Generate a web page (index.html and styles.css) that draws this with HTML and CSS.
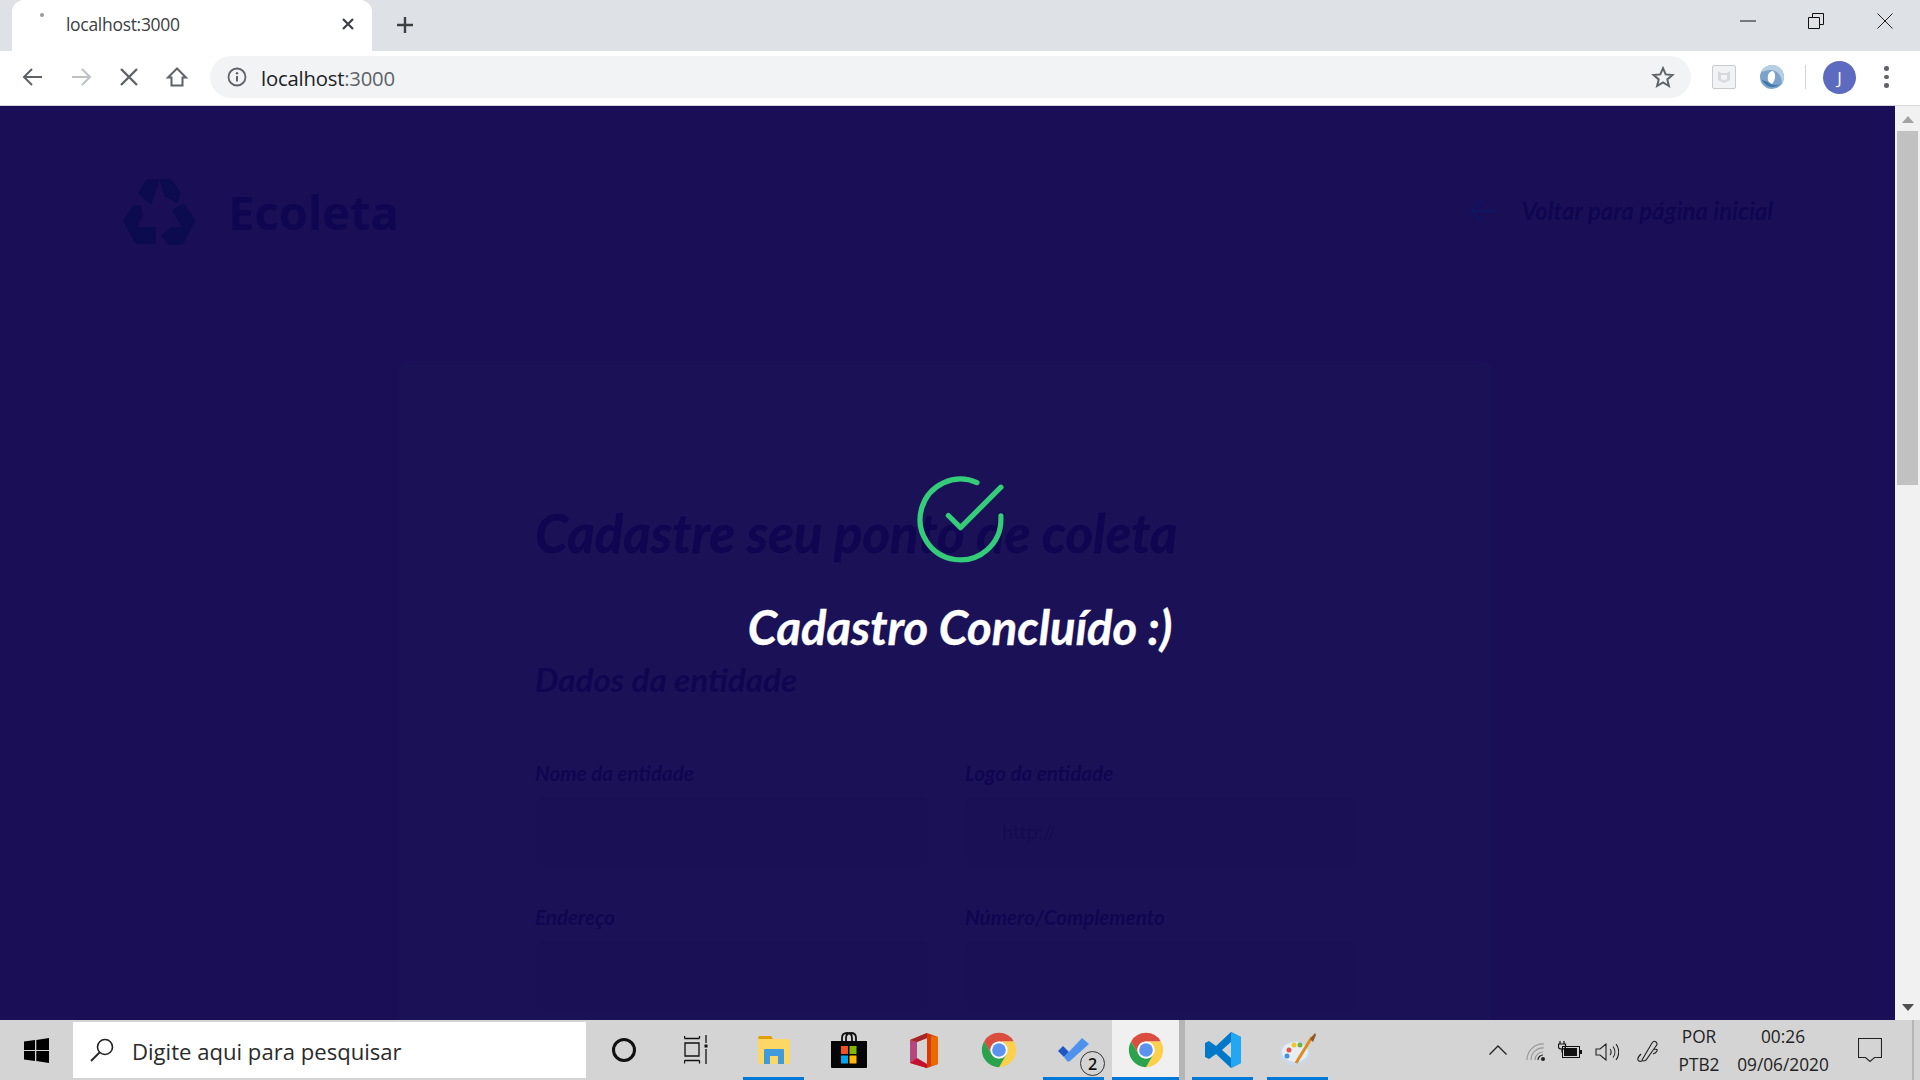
FILE: index.html
```html
<!DOCTYPE html>
<html lang="pt-BR">
<head>
<meta charset="utf-8">
<title>localhost:3000</title>
<link rel="stylesheet" href="styles.css">
</head>
<body>
<div class="window">
  <div class="tabstrip">
    <div class="tab">
      <span class="tab-spinner"></span>
      <span class="tab-title">localhost:3000</span>
      <svg class="tab-close" width="14" height="14" viewBox="0 0 14 14"><path d="M2 2l10 10M12 2L2 12" stroke="#3c4043" stroke-width="2.2" fill="none"/></svg>
    </div>
    <svg class="new-tab" width="20" height="20" viewBox="0 0 20 20"><path d="M10 2v16M2 10h16" stroke="#3c4043" stroke-width="2.4" fill="none"/></svg>
    <div class="win-controls">
      <svg class="win-min" width="16" height="2" viewBox="0 0 16 2"><path d="M0 1h16" stroke="#111" stroke-width="1"/></svg>
      <svg class="win-max" width="16" height="16" viewBox="0 0 16 16"><path d="M.5 4.5h11v11H.5zM4.5 4.5v-4h11v11h-4" stroke="#111" fill="none"/></svg>
      <svg class="win-close" width="16" height="16" viewBox="0 0 16 16"><path d="M.5.5l15 15M15.5.5l-15 15" stroke="#222" fill="none"/></svg>
    </div>
  </div>

  <div class="toolbar">
    <svg class="nav" width="24" height="24" viewBox="0 0 24 24"><path d="M21 12H4M11 4l-8 8 8 8" stroke="#5f6368" stroke-width="2" fill="none"/></svg>
    <svg class="nav" width="24" height="24" viewBox="0 0 24 24"><path d="M3 12h17M13 4l8 8-8 8" stroke="#bdc1c6" stroke-width="2" fill="none"/></svg>
    <svg class="nav" width="24" height="24" viewBox="0 0 24 24"><path d="M4 4l16 16M20 4L4 20" stroke="#5f6368" stroke-width="2.4" fill="none"/></svg>
    <svg class="nav" width="24" height="24" viewBox="0 0 24 24"><path d="M12 3.5L3 12.5h3.5v8h11v-8H21z" stroke="#5f6368" stroke-width="2" fill="none"/></svg>
    <div class="omnibox">
      <svg class="info" width="20" height="20" viewBox="0 0 20 20"><circle cx="10" cy="10" r="8.5" stroke="#5f6368" stroke-width="1.8" fill="none"/><path d="M10 9v5.5" stroke="#5f6368" stroke-width="2"/><circle cx="10" cy="6.2" r="1.2" fill="#5f6368"/></svg>
      <span class="url"><span class="url-host">localhost</span>:3000</span>
      <svg class="star" width="24" height="24" viewBox="0 0 24 24"><path d="M12 3.2l2.7 6.2 6.7.6-5.1 4.4 1.6 6.6L12 17.5 6.1 21l1.6-6.6L2.6 10l6.7-.6z" stroke="#5f6368" stroke-width="2" fill="none"/></svg>
    </div>
    <div class="ext-mcafee">
      <svg width="14" height="14" viewBox="0 0 14 14"><path d="M1 1l3 2h6l3-2v9l-6 3-6-3z M4 5v4l3 1.6L10 9V5z" fill="#d5dadd" fill-rule="evenodd"/></svg>
    </div>
    <svg class="ext-ring" width="24" height="24" viewBox="0 0 24 24"><circle cx="12" cy="12" r="12" fill="#7ba3c9"/><path d="M12 0a12 12 0 0 1 10 18.5C22 11 18 6 12 5 8 4.500 4 6 1.500 7 3 3 7 0 12 0z" fill="#b6cfe2"/><path d="M13 6c3 2 3 9-1 13-3-1-5-4-4-8 0-3 3-5 5-5z" fill="#fff"/><path d="M2 15c2 4 6 7 10 7 3 0 6-1 8-3-4 2-9 1-12-2z" fill="#3f78ad"/></svg>
    <span class="divider"></span>
    <span class="avatar">J</span>
    <span class="menu"><i></i><i></i><i></i></span>
  </div>

  <div class="viewport">
    <div class="page">
      <header class="page-header">
        <div class="logo">
          <svg class="logo-mark" width="73" height="68" viewBox="68 82 220 204"><g fill="#0c0b50" stroke="#0c0b50" stroke-width="5" stroke-linejoin="round"><path d="M116 128L140 88h35l-23 70z"/><path d="M180 86h25q7 0 11 7l23 32-8 29-36-19z"/><path d="M120 166l5 29-20 37h60v47h-47q-10 0-16-12l-32-57 30-44z"/><path d="M250 161l34 49-34 64q-4 6-12 6h-33l-19-25 29-23h35l-32-52z"/></g></svg>
        <span class="logo-text">Ecoleta</span>
        </div>
        <a class="back-link">
          <svg class="back-arrow" width="26" height="24" viewBox="0 0 26 24"><path d="M25 12H2M12 2L2 12l10 10" stroke="#101562" stroke-width="2.500" fill="none"/></svg>
          <span>Voltar para página inicial</span>
        </a>
      </header>
      <main class="card">
        <h1 class="card-title">Cadastre seu ponto de coleta</h1>
        <h2 class="card-section">Dados da entidade</h2>
        <div class="field-grid">
          <div class="field"><label>Nome da entidade</label><div class="input"></div></div>
          <div class="field"><label>Logo da entidade</label><div class="input input-placeholder">http://</div></div>
          <div class="field"><label>Endereço</label><div class="input"></div></div>
          <div class="field"><label>Número/Complemento</label><div class="input"></div></div>
        </div>
      </main>
    </div>
    <div class="overlay">
      <svg class="check" width="97" height="97" viewBox="0 0 24 24"><path d="M22 11.080V12a10 10 0 1 1-5.930-9.140M22 4L12 14.010l-3-3" stroke="#34cb79" stroke-width="1.300" stroke-linecap="round" stroke-linejoin="round" fill="none"/></svg>
      <p class="overlay-text">Cadastro Concluído :)</p>
    </div>
    <div class="scrollbar">
      <svg class="sb-arrow" width="12" height="7" viewBox="0 0 12 7"><path d="M6 0l6 7H0z" fill="#a3a3a3"/></svg>
      <div class="sb-track"><div class="sb-thumb"></div></div>
      <svg class="sb-arrow" width="12" height="7" viewBox="0 0 12 7"><path d="M6 7L0 0h12z" fill="#505050"/></svg>
    </div>
  </div>

  <div class="taskbar">
    <div class="start">
      <svg width="25" height="25" viewBox="0 0 25 25"><path d="M0 3.600l11-1.500v9.800H0zM12.300 1.900L25 0v11.900H12.300zM0 13.100h11v9.800L0 21.400zM12.300 13.100H25V25l-12.700-1.900z" fill="#000"/></svg>
    </div>
    <div class="search">
      <svg width="26" height="26" viewBox="0 0 26 26"><circle cx="16" cy="10" r="7.500" stroke="#222" stroke-width="1.600" fill="none"/><path d="M10.500 15.500L2 24" stroke="#222" stroke-width="1.800"/></svg>
      <span>Digite aqui para pesquisar</span>
    </div>
    <div class="tb-slot tb-cortana"><span class="cortana"></span></div>
    <div class="tb-slot tb-taskview">
      <svg width="24" height="30" viewBox="0 0 24 30"><path d="M.5 3.500h15M1 8h14v13H1zM.5 25.500h15M.5 25.500v3M15.500 25.500v3M.5 1v2.500M15.500 1v2.500M22 0v8M22 14v15" stroke="#111" stroke-width="1.300" fill="none"/><rect x="20.500" y="9.500" width="3" height="3" fill="#111"/></svg>
    </div>
    <div class="tb-slot tb-open">
      <svg width="32" height="28" viewBox="0 0 32 28"><path d="M0 2q0-2 2-2h11l2 3H1z" fill="#dfa000"/><path d="M0 3h30q2 0 2 2v21q0 2-2 2H2q-2 0-2-2z" fill="#fcd766"/><path d="M6 28V14q0-1 1-1h18q1 0 1 1v14h-6v-8h-8v8z" fill="#3f9bdc"/></svg>
    </div>
    <div class="tb-slot">
      <svg width="36" height="36" viewBox="0 0 36 36"><path d="M11 9V6q0-5 5-5t5 5v3M15 9V6q0-5 5-5t5 5v3" stroke="#111" stroke-width="1.800" fill="none"/><path d="M0 9h36v26q0 1-1 1H1q-1 0-1-1z" fill="#050505"/><rect x="10" y="14" width="7" height="8" fill="#f25022"/><rect x="18.500" y="14" width="7" height="8" fill="#7fba00"/><rect x="10" y="23.500" width="7" height="8" fill="#00a4ef"/><rect x="18.500" y="23.500" width="7" height="8" fill="#ffb900"/></svg>
    </div>
    <div class="tb-slot">
      <svg width="28" height="35" viewBox="0 0 28 35"><path d="M17 0l11 4v27l-11 4-17-5 17 1.500V5L7 9v16l-7 5V7z" fill="#d83b01"/><path d="M17 0v35l-5-2 5-2V5L7 9 0 7z" fill="#a4262c"/><path d="M7 9v16l-7 5V7z" fill="#b5477f"/><path d="M0 30l7-5 10 6v4z" fill="#c4112f"/><path d="M21 3l7 1v27l-7 2z" fill="#e86a00"/></svg>
    </div>
    <div class="tb-slot">
      <svg class="chrome" width="36" height="36" viewBox="3 3 42 42"><path d="M24 4A20 20 0 0 1 41.300 14H24A10 10 0 0 0 15.340 29L6.700 14A20 20 0 0 1 24 4z" fill="#db4d3f"/><path d="M41.300 14A20 20 0 0 1 24 44L32.660 29A10 10 0 0 0 24 14z" fill="#fcd04a"/><path d="M24 44A20 20 0 0 1 6.700 14L15.340 29A10 10 0 0 0 32.660 29z" fill="#2ba24c"/><circle cx="24" cy="24" r="10" fill="#fff"/><circle cx="24" cy="24" r="8" fill="#5c93ef"/></svg>
    </div>
    <div class="tb-slot tb-open tb-todo">
      <svg width="32" height="24" viewBox="0 0 32 24"><path d="M0 13l5-5 6 6-5 5z" fill="#1d57c4"/><path d="M6 19L24 0l7 6-19 17q-2 1-3 0z" fill="#4e92ee"/></svg>
      <span class="badge">2</span>
    </div>
    <div class="tb-slot tb-open tb-active">
      <svg class="chrome" width="36" height="36" viewBox="3 3 42 42"><path d="M24 4A20 20 0 0 1 41.300 14H24A10 10 0 0 0 15.340 29L6.700 14A20 20 0 0 1 24 4z" fill="#db4d3f"/><path d="M41.300 14A20 20 0 0 1 24 44L32.660 29A10 10 0 0 0 24 14z" fill="#fcd04a"/><path d="M24 44A20 20 0 0 1 6.700 14L15.340 29A10 10 0 0 0 32.660 29z" fill="#2ba24c"/><circle cx="24" cy="24" r="10" fill="#fff"/><circle cx="24" cy="24" r="8" fill="#5c93ef"/></svg>
    </div>
    <div class="tb-sep"></div>
    <div class="tb-slot tb-open">
      <svg width="36" height="36" viewBox="0 0 36 36"><path d="M26 0l10 5v26l-10 5-15-14-7 5-4-2V11l4-2 7 5zM26 10l-9 8 9 8z" fill="#0078c9" fill-rule="evenodd"/><path d="M26 0l10 5v26l-10 5z" fill="#22a7f2"/></svg>
    </div>
    <div class="tb-slot tb-open">
      <svg width="36" height="36" viewBox="0 0 36 36"><ellipse cx="15" cy="21" rx="15" ry="12" fill="#c9dbe8"/><ellipse cx="15" cy="20" rx="13" ry="10" fill="#e6eef4"/><circle cx="9" cy="18" r="2.500" fill="#e2574c"/><circle cx="14" cy="13" r="2.500" fill="#f4c430"/><circle cx="20" cy="13" r="2.500" fill="#6db33f"/><circle cx="7" cy="24" r="2.500" fill="#4a90d9"/><path d="M16 31L32 5" stroke="#e08a1e" stroke-width="3"/><path d="M30 7l5-6 1 2-3 7z" fill="#8a5a2b"/></svg>
    </div>
    <div class="tray">
      <svg class="tray-chevron" width="18" height="10" viewBox="0 0 18 10"><path d="M.5 9.500L9 1l8.500 8.500" stroke="#222" stroke-width="1.300" fill="none"/></svg>
      <svg class="tray-wifi" width="20" height="18" viewBox="0 0 20 18"><path d="M1 17A16 16 0 0 1 18 1M5 17A12 12 0 0 1 18 5M9 17A8 8 0 0 1 17 9" stroke="#999" stroke-width="1.200" fill="none"/><circle cx="17" cy="16" r="2" fill="#222"/><path d="M12 17a5 5 0 0 1 5-5" stroke="#222" stroke-width="1.200" fill="none"/></svg>
      <svg class="tray-battery" width="24" height="18" viewBox="0 0 24 18"><path d="M2 0v3M6 0v3M0.500 3h7v3q0 2-3.500 2t-3.500-2zM4 8v3h1" stroke="#111" stroke-width="1.200" fill="none"/><rect x="4.500" y="5.500" width="17" height="11" fill="none" stroke="#111"/><rect x="6" y="7" width="13" height="8" fill="#111"/><rect x="22" y="9" width="2" height="4" fill="#111"/></svg>
      <svg class="tray-sound" width="24" height="18" viewBox="0 0 24 18"><path d="M1 6h4l6-5v16l-6-5H1zM15 6a5 5 0 0 1 0 6M18 3.500a9 9 0 0 1 0 11M21 1a13 13 0 0 1 0 16" stroke="#222" stroke-width="1.100" fill="none"/></svg>
      <svg class="tray-pen" width="22" height="22" viewBox="0 0 22 22"><path d="M5 20L15 3q2-3 4-1t0 4L9 20q-3 2-4 0zM4 14q-4 4-3 6t4 1M17 9q4 0 3 2t-4 3" stroke="#222" stroke-width="1.100" fill="none"/></svg>
      <div class="tray-lang"><span>POR</span><span>PTB2</span></div>
      <div class="tray-clock"><span>00:26</span><span>09/06/2020</span></div>
      <svg class="tray-notif" width="24" height="24" viewBox="0 0 24 24"><path d="M.5.500h23v19h-7l-4.500 4-4.500-4h-7z" stroke="#222" stroke-width="1.100" fill="none"/></svg>
      <span class="tray-edge"></span>
    </div>
  </div>
</div>
</body>
</html>
```
FILE: styles.css
```css
* { box-sizing: border-box; }
html, body { margin: 0; padding: 0; overflow: hidden; }
.window { width: 1920px; height: 1080px; display: flex; flex-direction: column; overflow: hidden; font-family: "Open Sans", "Noto Sans", sans-serif; }

/* tab strip */
.tabstrip { height: 51px; flex: none; background: #dee1e6; display: flex; align-items: flex-end; padding-left: 12px; position: relative; }
.tab { width: 360px; height: 51px; background: #fff; border-radius: 12px 12px 0 0; display: flex; align-items: center; position: relative; padding-left: 54px; padding-bottom: 3px; }
.tab-spinner { position: absolute; left: 28px; top: 13px; width: 4px; height: 4px; border-radius: 50%; background: #9a9a9a; }
.tab-title { font-size: 17.500px; color: #3c4043; letter-spacing: -0.300px; }
.tab-close { margin-left: auto; margin-right: 17px; }
.new-tab { margin: 0 0 16px 23px; }
.win-controls { margin-left: auto; height: 51px; display: flex; align-items: flex-start; padding: 13px 27px 0 0; }
.win-min { margin: 7px 0 0 0; }
.win-max { margin-left: 52px; }
.win-close { margin-left: 53px; }

/* toolbar */
.toolbar { height: 55px; flex: none; background: #fff; border-bottom: 1px solid #d5d6d8; display: flex; align-items: center; padding: 0 0 2px 21px; }
.nav { margin-right: 24px; flex: none; }
.omnibox { width: 1481px; height: 42px; margin-left: -3px; background: #f1f3f4; border-radius: 21px; display: flex; align-items: center; padding: 0 16px 0 17px; }
.url { margin-left: 14px; padding-top: 2px; font-size: 20.300px; color: #5f6368; letter-spacing: -0.200px; }
.url-host { color: #202124; }
.star { margin-left: auto; }
.ext-mcafee { width: 24px; height: 24px; margin-left: 21px; border: 1.500px solid #c8ccd0; border-radius: 2px; background: #f1f3f4; display: flex; align-items: center; justify-content: center; }
.ext-ring { margin-left: 24px; }
.divider { width: 1px; height: 24px; background: #d0d2d4; margin-left: 21px; }
.avatar { width: 33px; height: 33px; margin-left: 17px; border-radius: 50%; background: #5c6bc0; color: #fff; font-size: 17px; display: flex; align-items: center; justify-content: center; }
.menu { display: flex; flex-direction: column; gap: 4px; margin-left: 28px; }
.menu i { width: 4.500px; height: 4.500px; border-radius: 50%; background: #5f6368; display: block; }

/* page */
.viewport { flex: 1; position: relative; overflow: hidden; background: #1a0f56; font-family: Lato, sans-serif; }
.page { width: 1896px; }
.page-header { display: flex; justify-content: space-between; padding: 71px 123px 0; height: 255px; align-items: flex-start; }
.logo { display: flex; align-items: center; gap: 32px; }
.logo-mark { margin-top: 1px; }
.logo-text { font-family: "Noto Sans", sans-serif; font-weight: 700; font-size: 47px; color: #100550; line-height: 66px; }
.back-link { display: flex; align-items: center; gap: 25px; margin: 19px 0 0 0; font-size: 24px; font-weight: 700; font-style: italic; color: #100550; }
.back-arrow { flex: none; }
.card { width: 1092px; margin: 0 0 0 399px; background: #1b1157; padding: 140px 137px 0; height: 700px; border-radius: 8px; }
.card-title { margin: 0 0 0 -1px; font-size: 52.800px; font-weight: 700; font-style: italic; color: #100550; line-height: 64px; -webkit-text-stroke: 0.4px #100550; }
.card-section { margin: 92px 0 0 -1px; font-size: 33.200px; font-weight: 700; font-style: italic; color: #100550; line-height: 44px; }
.field-grid { display: grid; grid-template-columns: 392px 389px; column-gap: 38px; row-gap: 40px; margin-top: 60px; }
.field { display: flex; flex-direction: column; }
.field label { margin-left: -1px; font-size: 20.600px; font-weight: 700; font-style: italic; color: #100550; line-height: 24px; margin-bottom: 12px; }
.input { height: 68px; background: #1a1056; border-radius: 8px; padding-left: 36px; display: flex; align-items: center; }
.input-placeholder { font-size: 20px; color: #150b50; }

/* overlay */
.overlay { position: absolute; inset: 0; display: flex; flex-direction: column; align-items: center; padding-top: 365px; }
.overlay-text { margin: 29px 0 0; font-size: 47.200px; font-weight: 700; font-style: italic; color: #fff; line-height: 60px; -webkit-text-stroke: 0.4px #fff; }
.check { flex: none; }

/* scrollbar */
.scrollbar { position: absolute; top: 0; right: 0; bottom: 0; width: 25px; background: #f1f1f1; display: flex; flex-direction: column; align-items: center; padding-top: 10px; padding-bottom: 9px; }
.sb-track { flex: 1; width: 100%; padding-top: 8px; }
.sb-thumb { height: 354px; margin: 0 auto; width: 21px; background: #c1c1c1; }

/* taskbar */
.taskbar { height: 60px; flex: none; background: #d4d4d4; display: flex; align-items: center; position: relative; }
.start { width: 73px; height: 60px; display: flex; align-items: center; justify-content: center; padding-right: 1px; }
.search { width: 513px; height: 56px; background: #fff; display: flex; align-items: center; padding-left: 16px; gap: 17px; font-size: 22.100px; color: #2b2b2b; }
.search span { padding-top: 1px; }
.tb-slot { width: 61px; height: 60px; margin-right: 14px; display: flex; align-items: center; justify-content: center; position: relative; flex: none; }
.tb-cortana { margin-left: 7px; margin-right: 11px; }
.tb-taskview { margin-right: 17px; }
.cortana { width: 24px; height: 24px; border: 3px solid #111; border-radius: 50%; display: block; }
.tb-open::after { content: ""; position: absolute; left: 0; right: 0; bottom: 0; height: 3px; background: #0078d7; }
.tb-todo { margin-right: 8px; }
.tb-active { width: 67px; background: #f0f0f0; margin-right: 0; }
.tb-sep { width: 13px; height: 60px; flex: none; background: linear-gradient(90deg, #b5b5b5 0 6px, #d4d4d4 6px); }
.badge { position: absolute; left: 37px; top: 31px; width: 25px; height: 25px; border: 1px solid #333; border-radius: 50%; background: #d4d4d4; color: #111; font-size: 16px; font-weight: 600; display: flex; align-items: center; justify-content: center; }
.tray { position: absolute; left: 0; right: 0; top: 0; bottom: 0; pointer-events: none; }
.tray > * { position: absolute; }
.tray-chevron { left: 1489px; top: 25px; }
.tray-wifi { left: 1526px; top: 23px; }
.tray-battery { left: 1558px; top: 21px; }
.tray-sound { left: 1595px; top: 23px; }
.tray-pen { left: 1637px; top: 20px; }
.tray-lang, .tray-clock { top: 3px; display: flex; flex-direction: column; align-items: center; font-size: 17.300px; line-height: 28px; color: #222; transform: translateX(-50%); }
.tray-lang { left: 1699px; }
.tray-clock { left: 1783px; }
.tray-notif { left: 1858px; top: 18px; }
.tray-edge { left: 1912px; top: 0; bottom: 0; width: 2px; background: #b5b5b5; }
```
